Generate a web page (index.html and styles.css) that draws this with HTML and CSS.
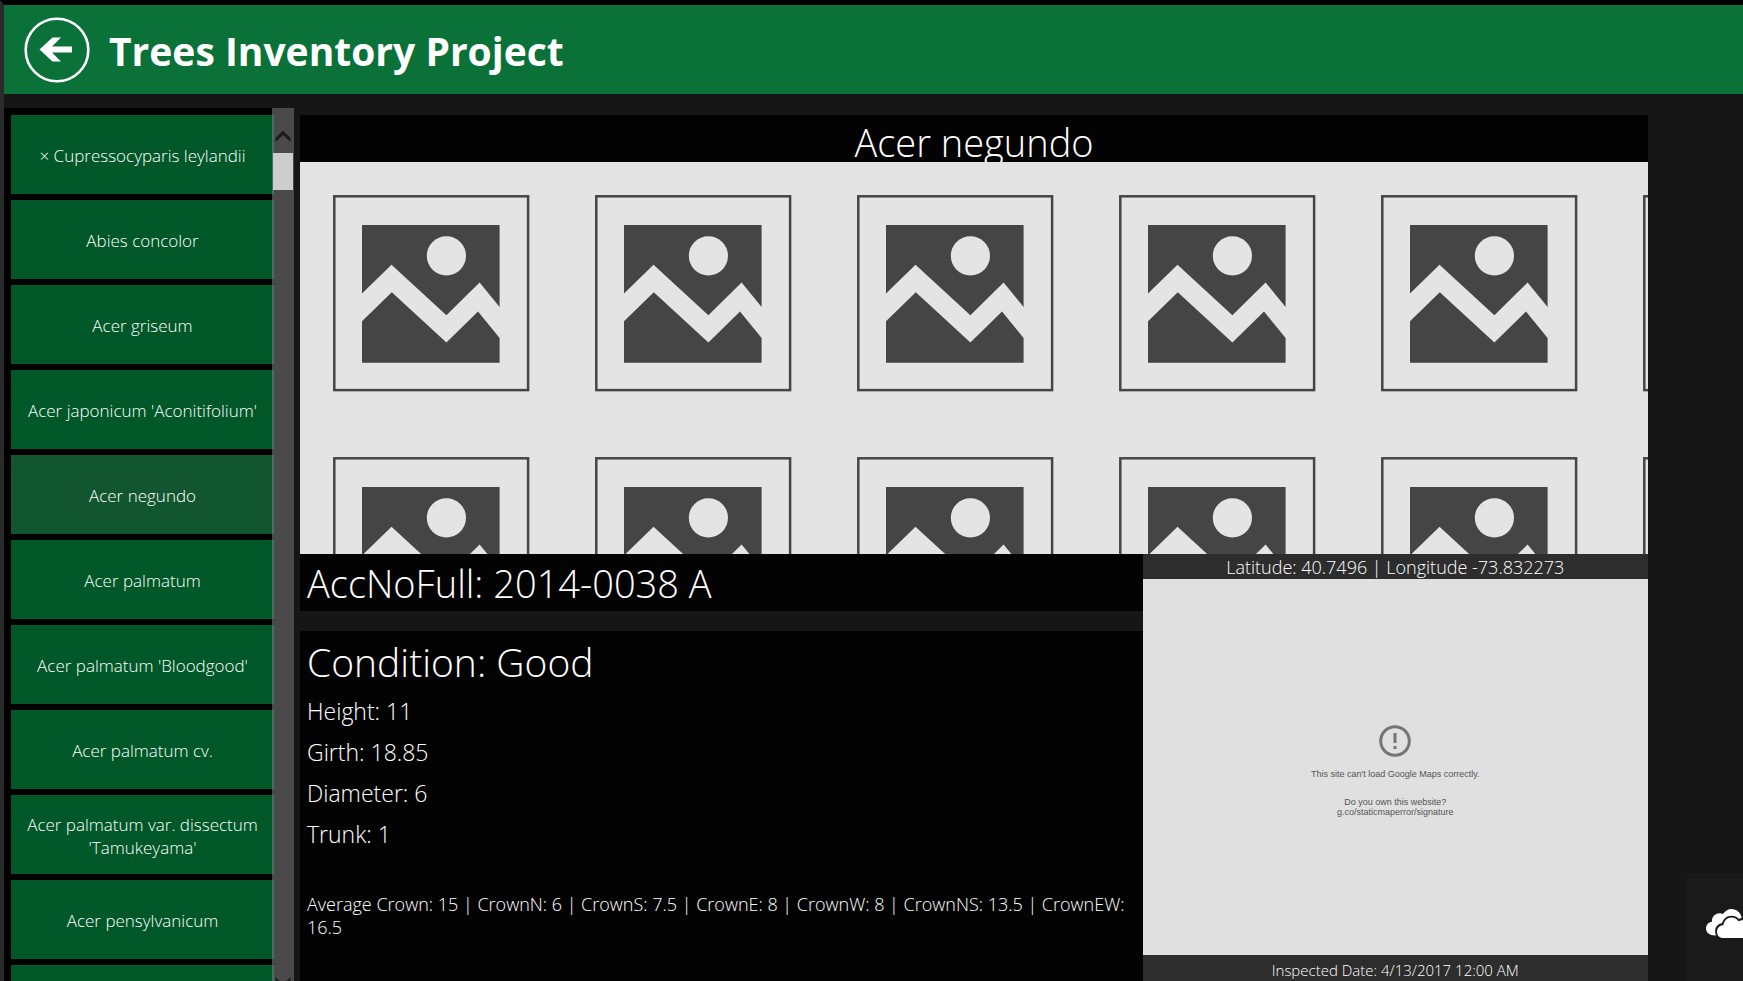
FILE: index.html
```html
<!DOCTYPE html>
<html lang="en">
<head>
<meta charset="utf-8">
<title>Trees Inventory Project</title>
<link rel="stylesheet" href="styles.css">
</head>
<body>
<header class="topbar">
  <button class="back" type="button" aria-label="Back">
    <svg viewBox="0 0 66 66" width="66" height="66" aria-hidden="true">
      <circle cx="33" cy="33" r="31.3" fill="none" stroke="#fff" stroke-width="2.6"/>
      <path d="M15.500 32.500 28.500 20.500H37L28 29.500H48V35.500H28L37 44.500H28.500Z" fill="#fff"/>
    </svg>
  </button>
  <h1 class="app-title">Trees Inventory Project</h1>
</header>
<div class="content">
  <nav class="species" aria-label="Species">
    <div class="species-list">
      <button class="item" type="button">× Cupressocyparis leylandii</button>
      <button class="item" type="button">Abies concolor</button>
      <button class="item" type="button">Acer griseum</button>
      <button class="item" type="button">Acer japonicum 'Aconitifolium'</button>
      <button class="item selected" type="button">Acer negundo</button>
      <button class="item" type="button">Acer palmatum</button>
      <button class="item" type="button">Acer palmatum 'Bloodgood'</button>
      <button class="item" type="button">Acer palmatum cv.</button>
      <button class="item" type="button">Acer palmatum var. dissectum 'Tamukeyama'</button>
      <button class="item" type="button">Acer pensylvanicum</button>
      <button class="item" type="button" aria-label="Next species"></button>
    </div>
    <div class="scrollbar">
      <svg class="arrow" viewBox="0 0 16 12" width="16" height="12" aria-hidden="true"><path d="M0.500 8 8 0.500 15.500 8V12L8 5 0.500 12Z" fill="#1c1c1c"/></svg>
      <div class="thumb"></div>
      <svg class="arrow down" viewBox="0 0 16 12" width="16" height="12" aria-hidden="true"><path d="M0.500 0 8 7 15.500 0V4L8 11.500 0.500 4Z" fill="#1c1c1c"/></svg>
    </div>
  </nav>
  <main class="detail">
    <h2 class="species-name">Acer negundo</h2>
    <svg class="gallery" role="img" aria-label="Image placeholders">
      <defs>
        <pattern id="tile" width="262" height="262" patternUnits="userSpaceOnUse">
          <rect width="262" height="262" fill="#e4e4e4"/>
          <rect x="34.300" y="34.300" width="193.800" height="193.800" fill="none" stroke="#454545" stroke-width="2.500"/>
          <path d="M62 63H199.600V145L179.600 120.500 146.400 153.200 91.500 102.700 62 131.500Z" fill="#454545"/>
          <path d="M62 159.300 91.800 130.300 146.400 180.500 178 149.600 199.600 176V200.700H62Z" fill="#454545"/>
          <circle cx="146.400" cy="93.800" r="19.600" fill="#e4e4e4"/>
        </pattern>
      </defs>
      <rect width="100%" height="100%" fill="url(#tile)"/>
    </svg>
    <div class="lower">
      <section class="facts">
        <p class="accession">AccNoFull: 2014-0038 A</p>
        <div class="measures">
          <p class="condition">Condition: Good</p>
          <p class="measure">Height: 11</p>
          <p class="measure">Girth: 18.85</p>
          <p class="measure">Diameter: 6</p>
          <p class="measure">Trunk: 1</p>
          <p class="crown">Average Crown: 15 | CrownN: 6 | CrownS: 7.5 | CrownE: 8 | CrownW: 8 | CrownNS: 13.5 | CrownEW: 16.5</p>
        </div>
      </section>
      <section class="location">
        <p class="coords">Latitude: 40.7496 | Longitude -73.832273</p>
        <div class="map">
          <svg viewBox="0 0 32 32" width="32" height="32" aria-hidden="true">
            <circle cx="16" cy="16" r="14.300" fill="none" stroke="#757575" stroke-width="3"/>
            <path d="M14.500 8H17.500V18H14.500ZM14.500 21H17.500V24H14.500Z" fill="#757575"/>
          </svg>
          <p class="map-error">This site can't load Google Maps correctly.</p>
          <p class="map-help">Do you own this website?<br>g.co/staticmaperror/signature</p>
        </div>
        <p class="inspected">Inspected Date: 4/13/2017 12:00 AM</p>
      </section>
    </div>
  </main>
</div>
<button class="cloud" type="button" aria-label="Cloud storage">
  <svg viewBox="0 0 52 30" width="52" height="30" aria-hidden="true">
    <path d="M9 26.500C3.500 26.500 0 23.500 0 19.500 0 16 2.500 13.200 6 12.800 5.500 8 9 4.200 13.500 4.200 14.800 4.200 15.800 4.500 17 5 19 2 22 0 25.500 0 30.500 0 34.500 3.500 35.800 8.500L33 10C31 7.800 28.500 6.700 25.500 6.700 21 6.700 17.500 9.500 16 14 12 14.800 9.200 17.800 9.200 21.500 9.200 23.500 9.300 25 10 26.500Z" fill="#fff"/>
    <path d="M17 29C13.500 29 11 26.500 11 22.700 11 19 13.700 16.300 17.500 16 18 11.500 21.500 8.500 25.500 8.500 28.500 8.500 31 10 32.500 12.300 38 9.500 44 13 44.500 18 48.500 18 51 20.500 51 23.700 51 27 48.500 29 45.500 29Z" fill="#fff"/>
  </svg>
</button>
</body>
</html>
```
FILE: styles.css
```css
* {
  box-sizing: border-box;
}

body {
  margin: 0;
  height: 100vh;
  display: flex;
  flex-direction: column;
  overflow: hidden;
  background: #161616;
  border-top: 5px solid #000;
  border-left: 4px solid #2b2b2b;
  color: #fff;
  font-family: "Open Sans", "Noto Sans", sans-serif;
  font-weight: 300;
}

h1,
h2,
p {
  margin: 0;
  font-weight: inherit;
}

button {
  border: 0;
  padding: 0;
  color: inherit;
  font: inherit;
}

.topbar {
  flex: none;
  display: flex;
  align-items: center;
  gap: 19px;
  height: 89px;
  padding-left: 20px;
  background: #0a7239;
}

.back {
  display: flex;
  background: none;
}

.app-title {
  font-size: 39px;
  line-height: 52px;
  font-weight: 700;
  padding-top: 3px;
}

.content {
  flex: 1;
  min-height: 0;
  display: flex;
  gap: 6px;
  padding: 14px 95px 0 0;
}

.species {
  position: relative;
  flex: none;
  width: 290px;
  overflow: hidden;
  background: #000;
}

.species-list {
  display: flex;
  flex-direction: column;
  gap: 6px;
  padding: 7px 20px 0 7px;
}

.item {
  flex: none;
  height: 79px;
  padding: 2px 8px 0;
  background: #005828;
  font-size: 17px;
  line-height: 23px;
}

.item.selected {
  background: #12562f;
}

.scrollbar {
  position: absolute;
  top: 0;
  right: 0;
  bottom: 0;
  width: 22px;
  display: flex;
  flex-direction: column;
  align-items: center;
  padding-top: 22px;
  background: rgba(128, 128, 128, 0.58);
}

.thumb {
  width: 20px;
  height: 37px;
  margin-top: 11px;
  background: #cdcdcd;
}

.arrow {
  flex: none;
}

.down {
  margin-top: auto;
  margin-bottom: -8px;
}

.detail {
  flex: 1;
  min-width: 0;
  display: flex;
  flex-direction: column;
  padding-top: 7px;
}

.species-name {
  height: 47px;
  background: #030303;
  overflow: hidden;
  text-align: center;
  font-size: 38px;
  line-height: 54px;
}

.gallery {
  flex: none;
  width: 100%;
  height: 392px;
}

.lower {
  flex: 1;
  min-height: 0;
  display: grid;
  grid-template-columns: 5fr 3fr;
}

.facts {
  display: flex;
  flex-direction: column;
  gap: 20px;
}

.accession {
  padding: 2px 7px 0;
  background: #030303;
  font-size: 38px;
  line-height: 55px;
}

.measures {
  flex: 1;
  padding: 1px 7px 0;
  background: #030303;
}

.condition {
  font-size: 39px;
  line-height: 59px;
}

.measure {
  font-size: 23px;
  line-height: 41px;
}

.crown {
  margin-top: 38px;
  font-size: 18px;
  line-height: 23px;
}

.location {
  display: flex;
  flex-direction: column;
  background: #2d2d2d;
  text-align: center;
}

.coords {
  padding-top: 2px;
  font-size: 18px;
  line-height: 23px;
}

.map {
  flex: 1;
  display: flex;
  flex-direction: column;
  align-items: center;
  justify-content: center;
  padding-top: 8px;
  background: #e0e0e0;
  color: #555;
  font-family: "Liberation Sans", Arial, sans-serif;
  font-size: 9px;
  font-weight: 400;
  line-height: 10px;
}

.map-error {
  margin-top: 12px;
}

.map-help {
  margin-top: 18px;
}

.inspected {
  padding-top: 4px;
  font-size: 15px;
  line-height: 22px;
}

.cloud {
  position: fixed;
  right: 0;
  bottom: 0;
  width: 56px;
  height: 108px;
  padding: 0 0 6px 19px;
  display: flex;
  align-items: center;
  overflow: hidden;
  background: #1a1a1a;
}

.cloud svg {
  flex: none;
}
```
